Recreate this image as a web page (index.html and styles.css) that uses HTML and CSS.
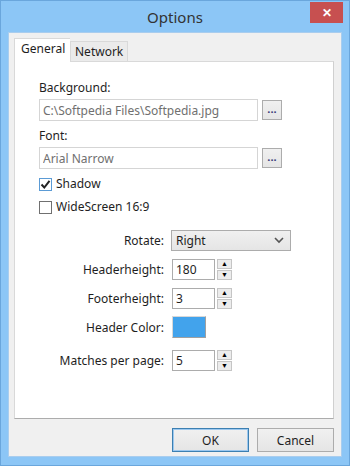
FILE: index.html
```html
<!DOCTYPE html>
<html lang="en">
<head>
    <meta charset="UTF-8">
    <meta name="viewport" content="width=device-width, initial-scale=1.0">
    <title>Options</title>
    <link rel="stylesheet" href="styles.css">
</head>
<body>
    <div class="window">
        <div class="titlebar">
            <span class="title">Options</span>
            <button class="close-btn">&#x2715;</button>
        </div>

        <div class="client">
            <div class="tabs">
                <div class="tab active">General</div>
                <div class="tab">Network</div>
            </div>

            <div class="panel">
                <label class="field-label">Background:</label>
                <div class="path-row">
                    <input type="text" class="path-input" value="C:\Softpedia Files\Softpedia.jpg" readonly>
                    <button class="browse-btn">...</button>
                </div>

                <label class="field-label font-label">Font:</label>
                <div class="path-row">
                    <input type="text" class="path-input" value="Arial Narrow" readonly>
                    <button class="browse-btn">...</button>
                </div>

                <div class="check-row first">
                    <span class="checkbox checked">
                        <svg width="11" height="11" viewBox="0 0 11 11"><path d="M1.5 5.5 L4.3 8.5 L9.5 1.8" fill="none" stroke="#222" stroke-width="2"/></svg>
                    </span>
                    <span>Shadow</span>
                </div>
                <div class="check-row">
                    <span class="checkbox"></span>
                    <span>WideScreen 16:9</span>
                </div>

                <div class="form-grid">
                    <div class="row row-rotate">
                        <span class="row-label">Rotate:</span>
                        <div class="select">
                            <span>Right</span>
                            <svg width="10" height="7" viewBox="0 0 10 7"><path d="M1 1 L5 5 L9 1" fill="none" stroke="#555" stroke-width="1.6"/></svg>
                        </div>
                    </div>
                    <div class="row row-header">
                        <span class="row-label">Headerheight:</span>
                        <div class="spin">
                            <div class="spin-input">180</div>
                            <div class="spin-btns"><span>&#x25B2;</span><span>&#x25BC;</span></div>
                        </div>
                    </div>
                    <div class="row row-footer">
                        <span class="row-label">Footerheight:</span>
                        <div class="spin">
                            <div class="spin-input">3</div>
                            <div class="spin-btns"><span>&#x25B2;</span><span>&#x25BC;</span></div>
                        </div>
                    </div>
                    <div class="row row-color">
                        <span class="row-label">Header Color:</span>
                        <div class="swatch"></div>
                    </div>
                    <div class="row row-matches">
                        <span class="row-label">Matches per page:</span>
                        <div class="spin">
                            <div class="spin-input">5</div>
                            <div class="spin-btns"><span>&#x25B2;</span><span>&#x25BC;</span></div>
                        </div>
                    </div>
                </div>
            </div>

            <div class="actions">
                <button class="dlg-btn default">OK</button>
                <button class="dlg-btn">Cancel</button>
            </div>
        </div>
    </div>
</body>
</html>
```

FILE: styles.css
```css
body {
    margin: 0;
    padding: 0;
    font-family: 'Noto Sans', 'Open Sans', sans-serif;
    font-size: 12px;
    color: #1e1e1e;
}

.window {
    width: 350px;
    height: 466px;
    box-sizing: border-box;
    background-color: #8cc6f6;
    border: 1px solid #6aa6dc;
    display: flex;
    flex-direction: column;
}

.titlebar {
    height: 31px;
    position: relative;
    display: flex;
    align-items: center;
    justify-content: center;
}

.title {
    font-size: 15px;
    color: #333;
    margin-top: 1px;
}

.close-btn {
    position: absolute;
    top: 1px;
    right: 6px;
    width: 33px;
    height: 21px;
    border: none;
    background-color: #c75050;
    color: white;
    font-size: 12px;
    font-weight: bold;
    padding: 0;
}

.client {
    margin: 0 7px;
    height: 425px;
    box-sizing: border-box;
    background-color: #f0f0f0;
    border: 1px solid #a9cdee;
    padding: 5px 7px 0 5px;
    display: flex;
    flex-direction: column;
}

.tabs {
    display: flex;
    align-items: flex-end;
    height: 23px;
    position: relative;
    z-index: 1;
}

.tab {
    box-sizing: border-box;
    height: 20px;
    padding: 0 4px;
    border: 1px solid #d9d9d9;
    border-bottom: none;
    background-color: #ebebeb;
    line-height: 19px;
}

.tab.active {
    height: 24px;
    margin-bottom: -1px;
    width: 56px;
    padding: 0 6px;
    background-color: #fff;
    border-right: none;
    line-height: 19px;
}

.panel {
    height: 358px;
    box-sizing: border-box;
    background-color: #fff;
    border: 1px solid #d9d9d9;
    border-bottom-color: #acacac;
    border-right-color: #d0d0d0;
    padding: 18px 0 0 24px;
    display: flex;
    flex-direction: column;
    align-items: flex-start;
}

.field-label {
    line-height: 16px;
    margin-bottom: 3px;
}

.font-label {
    margin-top: 7px;
}

.path-row {
    display: flex;
    align-items: center;
    gap: 4px;
}

.path-input {
    width: 219px;
    height: 22px;
    box-sizing: border-box;
    border: 1px solid #d5d5d5;
    padding: 0 3px;
    font-family: inherit;
    font-size: 12px;
    color: #707070;
    background-color: #fff;
    outline: none;
}

.browse-btn {
    width: 20px;
    height: 20px;
    box-sizing: border-box;
    border: 1px solid #acacac;
    background: linear-gradient(#f0f0f0, #e5e5e5);
    font-family: inherit;
    font-size: 11px;
    font-weight: bold;
    color: #3a3a7a;
    padding: 0 0 4px 0;
    line-height: 1;
}

.check-row {
    display: flex;
    align-items: center;
    gap: 4px;
    height: 14px;
    line-height: 14px;
    margin-top: 9px;
}

.check-row.first {
    margin-top: 8px;
}

.checkbox {
    width: 13px;
    height: 13px;
    box-sizing: border-box;
    border: 1px solid #707070;
    background-color: #fff;
    display: flex;
    align-items: center;
    justify-content: center;
}

.checkbox.checked {
    border-color: #5b9bd5;
}

.form-grid {
    display: flex;
    flex-direction: column;
    margin-top: 16px;
}

.row {
    display: grid;
    grid-template-columns: 125px auto;
    column-gap: 7px;
    align-items: center;
}

.row-label {
    text-align: right;
}

.row-header {
    margin-top: 8px;
}

.row-footer {
    margin-top: 8px;
}

.row-color {
    margin-top: 7px;
}

.row-matches {
    margin-top: 12px;
}

.select {
    width: 120px;
    height: 21px;
    box-sizing: border-box;
    border: 1px solid #acacac;
    background: linear-gradient(#f0f0f0, #e5e5e5);
    display: flex;
    align-items: center;
    justify-content: space-between;
    padding: 0 6px 0 4px;
}

.spin {
    display: flex;
    gap: 2px;
    margin-left: 1px;
}

.spin-input {
    width: 43px;
    height: 21px;
    box-sizing: border-box;
    border: 1px solid #acacac;
    padding-left: 3px;
    line-height: 19px;
}

.spin-btns {
    display: flex;
    flex-direction: column;
    width: 15px;
    height: 21px;
    gap: 1px;
}

.spin-btns span {
    flex: 1;
    box-sizing: border-box;
    border: 1px solid #c5c5c5;
    background-color: #ececec;
    font-size: 7px;
    line-height: 8px;
    text-align: center;
    color: #000;
}

.swatch {
    width: 34px;
    height: 22px;
    box-sizing: border-box;
    margin-left: 1px;
    background-color: #42a3ec;
    border: 1px solid #d8d8d8;
    border-right-color: #a0a0a0;
    border-bottom-color: #a0a0a0;
}

.actions {
    display: flex;
    justify-content: flex-end;
    gap: 8px;
    margin-top: 9px;
}

.dlg-btn {
    width: 77px;
    height: 24px;
    box-sizing: border-box;
    border: 1px solid #acacac;
    background: linear-gradient(#f0f0f0, #e5e5e5);
    font-family: inherit;
    font-size: 12px;
    color: #1e1e1e;
}

.dlg-btn.default {
    border-color: #3c7fb1;
    box-shadow: inset 0 0 0 1px #9cc8ef;
}
```
